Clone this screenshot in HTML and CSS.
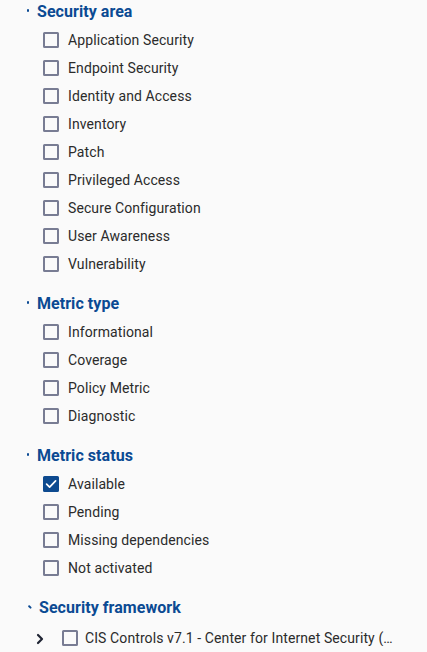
FILE: index.html
```html
<!DOCTYPE html>
<html>
<head>
<meta charset="utf-8">
<link rel="stylesheet" href="styles.css">
</head>
<body>
<div class="filters">
  <section class="group first">
    <div class="group-head"><span class="mark"></span><span class="title">Security area</span></div>
    <ul class="options">
      <li><span class="box"></span>Application Security</li>
      <li><span class="box"></span>Endpoint Security</li>
      <li><span class="box"></span>Identity and Access</li>
      <li><span class="box"></span>Inventory</li>
      <li><span class="box"></span>Patch</li>
      <li><span class="box"></span>Privileged Access</li>
      <li><span class="box"></span>Secure Configuration</li>
      <li><span class="box"></span>User Awareness</li>
      <li><span class="box"></span>Vulnerability</li>
    </ul>
  </section>
  <section class="group">
    <div class="group-head"><span class="mark"></span><span class="title">Metric type</span></div>
    <ul class="options">
      <li><span class="box"></span>Informational</li>
      <li><span class="box"></span>Coverage</li>
      <li><span class="box"></span>Policy Metric</li>
      <li><span class="box"></span>Diagnostic</li>
    </ul>
  </section>
  <section class="group">
    <div class="group-head"><span class="mark"></span><span class="title">Metric status</span></div>
    <ul class="options">
      <li><span class="box checked"><svg viewBox="0 0 16 16" width="16" height="16"><path d="M3.6 8.2 L6.6 11.1 L12.6 4.9" fill="none" stroke="#fff" stroke-width="1.7" stroke-linecap="round" stroke-linejoin="round"/></svg></span>Available</li>
      <li><span class="box"></span>Pending</li>
      <li><span class="box"></span>Missing dependencies</li>
      <li><span class="box"></span>Not activated</li>
    </ul>
  </section>
  <section class="group">
    <div class="group-head"><span class="mark diag"></span><span class="title fw">Security framework</span></div>
    <ul class="options tree">
      <li><span class="chev"><svg viewBox="0 0 10 12" width="10" height="12"><path d="M3 2 L7 6 L3 10" fill="none" stroke="#1f2433" stroke-width="2.2" stroke-linecap="round" stroke-linejoin="round"/></svg></span><span class="box"></span><span class="label">CIS Controls v7.1 - Center for Internet Security (CIS)</span></li>
    </ul>
  </section>
</div>
</body>
</html>
```
FILE: styles.css
```css
html, body {
  margin: 0;
  padding: 0;
  background: #fafafa;
}
body {
  font-family: Roboto, "Liberation Sans", Arial, sans-serif;
  color: #2b2b2b;
  width: 427px;
  height: 652px;
  overflow: hidden;
}
.filters {
  display: flex;
  flex-direction: column;
  gap: 13px;
}
.group.first {
  margin-top: -1px;
}
.group-head {
  height: 24px;
  display: flex;
  align-items: center;
  margin-bottom: 3px;
}
.mark {
  width: 2px;
  height: 3px;
  background: #0b4a93;
  margin-left: 27px;
  margin-right: 8px;
  margin-top: -1px;
  border-radius: 1px;
}
.mark.diag {
  width: 4px;
  height: 1.6px;
  transform: rotate(45deg);
  margin-left: 28px;
  margin-right: 5px;
  margin-top: 0;
}
.title {
  font-size: 16px;
  font-weight: 700;
  color: #0b4a93;
  letter-spacing: 0.05px;
}
.title.fw {
  margin-left: 2px;
}
.options {
  list-style: none;
  margin: 0;
  padding: 0;
}
.options li {
  height: 28px;
  display: flex;
  align-items: center;
  padding-left: 43px;
  font-size: 14px;
  letter-spacing: 0.1px;
}
.box {
  width: 16px;
  height: 16px;
  box-sizing: border-box;
  border: 2px solid #787c93;
  border-radius: 1.5px;
  margin-right: 9px;
  flex: none;
  display: flex;
  align-items: center;
  justify-content: center;
}
.box.checked {
  background: #0d4a8f;
  border-color: #0d4a8f;
}
.box.checked svg {
  flex: none;
}
.tree li {
  height: 32px;
  padding-left: 35px;
  margin-top: 2px;
}
.chev {
  width: 10px;
  height: 12px;
  display: flex;
  margin-right: 17px;
  margin-top: 2px;
}
.tree .box {
  margin-right: 7px;
}
.label {
  white-space: nowrap;
  overflow: hidden;
  text-overflow: ellipsis;
  width: 312px;
}
```
